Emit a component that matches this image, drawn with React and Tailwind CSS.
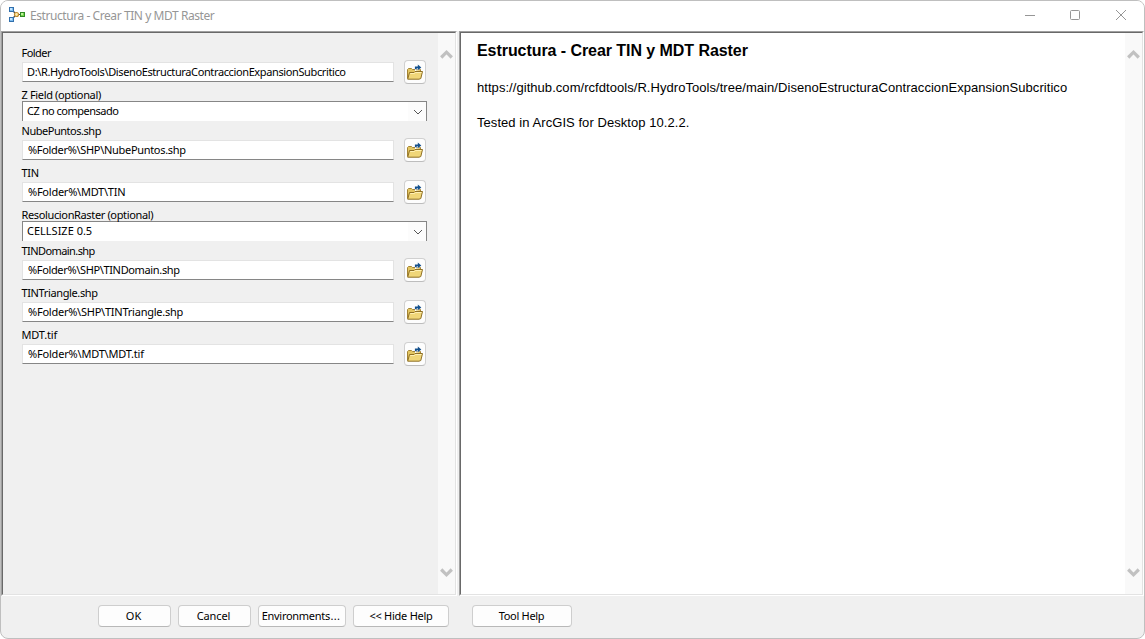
import React from "react";

function ModelIcon() {
  return (
    <svg width="17" height="16" viewBox="0 0 17 16" className="shrink-0">
      <path d="M4 4L7 7M4 11L7 8" fill="none" stroke="#4a4a4a" strokeWidth="1.300" />
      <path d="M9 7.500H12" stroke="#4a4a4a" />
      <rect x="0.500" y="0.500" width="4" height="4" fill="#7fbdf0" stroke="#3270ad" />
      <rect x="1" y="1" width="2" height="2" fill="#c4e5ff" />
      <rect x="0.500" y="10.500" width="4" height="4" fill="#7fbdf0" stroke="#3270ad" />
      <rect x="1" y="11" width="2" height="2" fill="#c4e5ff" />
      <circle cx="7.500" cy="7.500" r="2" fill="#ffeeb0" stroke="#c08a2c" strokeWidth="1.200" />
      <rect x="11.500" y="5.500" width="4" height="4" fill="#79d64e" stroke="#2f8a24" />
      <rect x="12" y="6" width="2" height="2" fill="#bdf39c" />
    </svg>
  );
}

function FolderIcon() {
  return (
    <svg width="16" height="16" viewBox="0 0 16 16">
      <path d="M0.500 14.500V5.500L1.500 4.500H4.500L5.500 5.500H13.500V9" fill="#e3c662" stroke="#a48434" />
      <path d="M0.700 15.200L2.500 8.500H7L8 7.500H15.500L13.800 14.500L12 15.200Z" fill="#f0d678" stroke="#8f7026" />
      <path d="M3.300 9.500H7.500L8.500 8.500H14.500" fill="none" stroke="#fff1b5" />
      <path d="M8 7V2.500H10V0.300L14.500 3.500L10.500 7V5H9.500V7Z" fill="#ffffff" />
      <path d="M8.800 5.300V3.300H12" fill="none" stroke="#14508c" strokeWidth="1.800" />
      <path d="M10.800 0.500L14.300 3.400L10.800 6.300Z" fill="#14508c" />
    </svg>
  );
}

function ScrollBar() {
  return (
    <div className="flex w-[17px] shrink-0 flex-col items-center justify-between bg-[#f9f9f9] pt-[16px] pb-[16px]">
      <svg width="13" height="11" viewBox="0 0 13 11"><path d="M1.200 8.500L6.500 3.200L11.800 8.500" fill="none" stroke="#c1c1c1" strokeWidth="3.200" /></svg>
      <svg width="13" height="11" viewBox="0 0 13 11"><path d="M1.200 2.500L6.500 7.800L11.800 2.500" fill="none" stroke="#c1c1c1" strokeWidth="3.200" /></svg>
    </div>
  );
}

function TextField({ label, labelClass, value, valueClass }) {
  return (
    <div className="h-[42px]">
      <div className="-ml-[0.5px] flex h-[18px] items-center"><span className={labelClass}>{label}</span></div>
      <div className="flex h-5">
        <div className="flex h-5 w-[372px] items-center border border-[#e3e3e3] border-b-[#868686] bg-white pl-1">
          <span className={valueClass}>{value}</span>
        </div>
        <button className="-mt-0.5 ml-[10px] flex h-6 w-[22px] items-center justify-center rounded-[4px] border border-[#d0d0d0] border-b-[#bdbdbd] bg-[#fdfdfd]">
          <FolderIcon />
        </button>
      </div>
    </div>
  );
}

function SelectField({ label, labelClass, value, valueClass }) {
  return (
    <div className="h-9 pt-[3px]">
      <div className="-ml-[0.5px] flex h-3 items-center"><span className={labelClass}>{label}</span></div>
      <div className="flex h-5 w-[405px] items-center justify-between border-x border-t border-[#868686] bg-white pl-1">
        <span className={`pb-[2px] ${valueClass}`}>{value}</span>
        <span className="flex h-full w-[18px] items-center justify-center bg-[#fcfcfc] pl-[2px]">
          <svg width="10" height="6" viewBox="0 0 10 6"><path d="M1 1L5 5L9 1" fill="none" stroke="#555" /></svg>
        </span>
      </div>
    </div>
  );
}

const buttonBase = "flex h-[22px] items-center justify-center rounded-[4px] border border-[#cecece] border-b-[#b8b8b8] bg-[#fdfdfd] pr-[2px]";

export default function App() {
  return (
    <div className="h-[639px] w-[1145px] bg-white font-['Noto_Sans',sans-serif] text-[11px] leading-[12px] whitespace-pre text-black">
      <div className="flex h-full w-full flex-col overflow-hidden rounded-[8px] border border-[#bfbfbf] bg-[#f0f0f0]">
        <header className="flex h-[30px] shrink-0 items-center bg-white pb-[2px] pl-2 text-[#969696]">
          <ModelIcon />
          <span className="ml-1 pt-px text-[12px] tracking-[-0.430px]">Estructura - Crear TIN y MDT Raster</span>
          <div className="mr-[17px] ml-auto flex items-center">
            <svg width="11" height="12" viewBox="0 0 11 12"><path d="M0 6.500H10" stroke="#969696" /></svg>
            <svg className="ml-[33px]" width="12" height="12" viewBox="0 0 12 12"><rect x="1.500" y="1.500" width="9" height="9" rx="1" fill="none" stroke="#969696" /></svg>
            <svg className="ml-[34px]" width="12" height="12" viewBox="0 0 12 12"><path d="M1 1L11 11M11 1L1 11" fill="none" stroke="#969696" /></svg>
          </div>
        </header>
        <main className="flex h-[565px] shrink-0">
          <div className="flex w-[456px] shrink-0 border border-t-[#a0a0a0] border-r-white border-b-white border-l-[#a0a0a0]">
            <div className="flex flex-1 border border-t-[#696969] border-r-[#e3e3e3] border-b-[#e3e3e3] border-l-[#696969]">
              <div className="flex-1 pt-[11px] pl-[19px]">
                <TextField label="Folder" labelClass="tracking-[-0.550px]" value={"D:\\R.HydroTools\\DisenoEstructuraContraccionExpansionSubcritico"} valueClass="tracking-[-0.380px]" />
                <SelectField label="Z Field (optional)" labelClass="tracking-[-0.350px]" value="CZ no compensado" valueClass="tracking-[-0.490px]" />
                <TextField label="NubePuntos.shp" labelClass="tracking-[-0.470px]" value={"%Folder%\\SHP\\NubePuntos.shp"} valueClass="ml-px tracking-[-0.310px]" />
                <TextField label="TIN" labelClass="tracking-[-0.250px]" value={"%Folder%\\MDT\\TIN"} valueClass="ml-px tracking-[-0.240px]" />
                <SelectField label="ResolucionRaster (optional)" labelClass="tracking-[-0.360px]" value="CELLSIZE 0.5" valueClass="tracking-[0px]" />
                <TextField label="TINDomain.shp" labelClass="tracking-[-0.580px]" value={"%Folder%\\SHP\\TINDomain.shp"} valueClass="ml-px tracking-[-0.350px]" />
                <TextField label="TINTriangle.shp" labelClass="tracking-[-0.370px]" value={"%Folder%\\SHP\\TINTriangle.shp"} valueClass="ml-px tracking-[-0.235px]" />
                <TextField label="MDT.tif" labelClass="tracking-[-0.160px]" value={"%Folder%\\MDT\\MDT.tif"} valueClass="ml-px tracking-[-0.190px]" />
              </div>
              <ScrollBar />
            </div>
          </div>
          <div className="ml-0.5 flex flex-1 border border-t-[#a0a0a0] border-r-white border-b-white border-l-[#a0a0a0]">
            <div className="flex flex-1 border border-t-[#696969] border-r-[#e3e3e3] border-b-[#e3e3e3] border-l-[#696969] bg-white">
              <article className="flex-1 pt-[8px] pl-4 font-['Liberation_Sans',Arial,sans-serif]">
                <h1 className="text-[16px] leading-[20px] font-bold tracking-[-0.060px]">Estructura - Crear TIN y MDT Raster</h1>
                <p className="mt-[19px] text-[13px] leading-[16px] tracking-[0.050px]">https://github.com/rcfdtools/R.HydroTools/tree/main/DisenoEstructuraContraccionExpansionSubcritico</p>
                <p className="mt-[19px] text-[13px] leading-[16px] tracking-[0.060px]">Tested in ArcGIS for Desktop 10.2.2.</p>
              </article>
              <ScrollBar />
            </div>
          </div>
        </main>
        <footer className="flex pt-[9px] pl-[97px]">
          <button className={`${buttonBase} w-[73px]`}>OK</button>
          <button className={`${buttonBase} ml-[7px] w-[73px]`}><span className="tracking-[-0.100px]">Cancel</span></button>
          <button className={`${buttonBase} ml-[7px] w-[88px]`}><span className="tracking-[-0.280px]">Environment<span className="tracking-[0.300px]">s...</span></span></button>
          <button className={`${buttonBase} ml-[7px] w-[96px]`}><span className="ml-[2px] tracking-[-0.250px]">&lt;&lt; Hide Help</span></button>
          <button className={`${buttonBase} ml-[23px] w-[100px]`}><span className="ml-px tracking-[-0.300px]">Tool Help</span></button>
        </footer>
      </div>
    </div>
  );
}
